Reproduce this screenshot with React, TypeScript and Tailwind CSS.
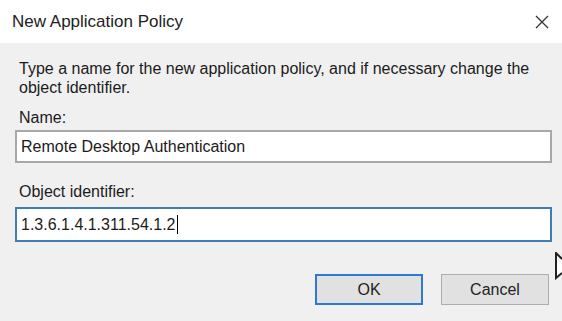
export default function App() {
  return (
    <div
      className="relative w-[562px] h-[321px] overflow-hidden bg-[#f0f0f0] text-[#1b1b1b]"
      style={{ fontFamily: '"Liberation Sans", Arial, sans-serif' }}
    >
      <div className="h-[43px] bg-white flex items-center justify-between pl-[12px] pr-[12px]">
        <span className="text-[17px] text-[#222]">New Application Policy</span>
        <svg width="14" height="14" viewBox="0 0 14 14" className="mr-[1px]">
          <path d="M1 1 L13 13 M13 1 L1 13" stroke="#333" strokeWidth="1.3" />
        </svg>
      </div>
      <div className="pl-[15px] pr-[10px] pt-[16px]">
        <p className="pl-[4px] text-[16px] leading-[19px]">
          Type a name for the new application policy, and if necessary change the
          <br />
          object identifier.
        </p>
        <div className="pl-[4px] mt-[11px] text-[16px] leading-[19px]">Name:</div>
        <div className="mt-[3px] w-[537px] h-[33px] border-2 border-[#a8a8a8] bg-white flex items-center pl-[4px] text-[16px]">
          Remote Desktop Authentication
        </div>
        <div className="pl-[4px] mt-[19px] text-[16px] leading-[19px]">Object identifier:</div>
        <div className="mt-[6px] w-[537px] h-[35px] border-2 border-[#3d7fb4] bg-white flex items-center pl-[4px] text-[16px]">
          <span>1.3.6.1.4.1.311.54.1.2</span>
          <span className="inline-block w-[1px] h-[19px] bg-black ml-[1px]" />
        </div>
        <div className="mt-[32px] flex gap-[18px] pl-[300px]">
          <button className="w-[108px] h-[31px] border-2 border-[#2f7ad0] bg-[#e1e1e1] text-[16px] text-[#222]">
            OK
          </button>
          <button className="w-[108px] h-[31px] border border-[#adadad] bg-[#e1e1e1] text-[16px] text-[#222]">
            Cancel
          </button>
        </div>
      </div>
      <svg
        className="absolute left-[554px] top-[252px]"
        width="10"
        height="28"
        viewBox="0 0 10 28"
      >
        <path d="M2 1 L10 9 L10 22 L2 26 Z" fill="white" />
        <path d="M8 7 L2 1 L2 26 L8 21" fill="none" stroke="#222" strokeWidth="2" />
      </svg>
    </div>
  );
}
